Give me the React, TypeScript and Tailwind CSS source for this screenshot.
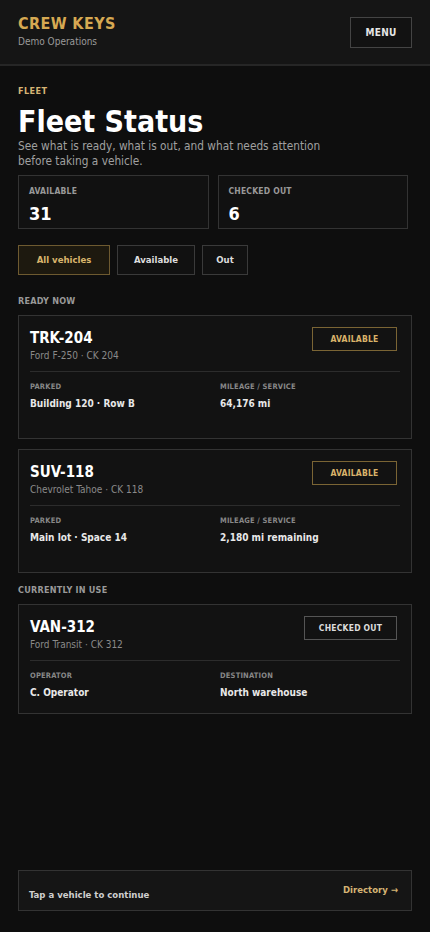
import React from "react";

const ready = [
  {
    id: "TRK-204",
    model: "Ford F-250 · CK 204",
    a: ["PARKED", "Building 120 · Row B"],
    b: ["MILEAGE / SERVICE", "64,176 mi"],
  },
  {
    id: "SUV-118",
    model: "Chevrolet Tahoe · CK 118",
    a: ["PARKED", "Main lot · Space 14"],
    b: ["MILEAGE / SERVICE", "2,180 mi remaining"],
  },
];

function VehicleCard({
  id,
  model,
  a,
  b,
  out,
}: {
  id: string;
  model: string;
  a: string[];
  b: string[];
  out?: boolean;
}) {
  return (
    <div className={`border border-[#333] bg-[#121212] pl-[11px] pr-[11px] pt-[11px] ${out ? "pb-[13px]" : "pb-[27px]"}`}>
      <div className="flex items-start justify-between">
        <div>
          <div className="text-[15px] font-bold leading-[22px] text-white">{id}</div>
          <div className="text-[10px] leading-[14px] text-[#8a8a8a]">{model}</div>
        </div>
        {out ? (
          <div className="mr-[3px] flex h-[24px] w-[93px] items-center justify-center border border-[#555] text-[8.5px] font-bold tracking-wide text-[#ddd]">
            CHECKED OUT
          </div>
        ) : (
          <div className="mr-[3px] flex h-[24px] w-[85px] items-center justify-center border border-[#7a6434] text-[8.5px] font-bold tracking-wide text-[#d9b36a]">
            AVAILABLE
          </div>
        )}
      </div>
      <div className="mt-[8px] border-t border-[#2c2c2c]" />
      <div className="mt-[10px] grid grid-cols-2 gap-[10px]">
        {[a, b].map((f) => (
          <div key={f[0]}>
            <div className="text-[7.5px] font-bold leading-[10px] tracking-wide text-[#888]">{f[0]}</div>
            <div className="mt-[5px] text-[10px] font-bold leading-[14px] text-[#e8e8e8]">{f[1]}</div>
          </div>
        ))}
      </div>
    </div>
  );
}

export default function App() {
  return (
    <div
      className="flex min-h-[932px] flex-col bg-[#0e0e0e] text-white"
      style={{ fontFamily: '"DejaVu Sans Condensed", "DejaVu Sans", Verdana, sans-serif' }}
    >
      {/* Header */}
      <header className="flex h-[66px] items-center justify-between border-b-2 border-[#262626] bg-[#151515] px-[18px]">
        <div className="mb-[2px]">
          <div className="text-[16px] font-bold leading-[20px] tracking-wide text-[#d6a952]">CREW KEYS</div>
          <div className="mt-[2px] text-[10px] leading-[12px] text-[#9a9a9a]">Demo Operations</div>
        </div>
        <button className="flex h-[31px] w-[62px] items-center justify-center border border-[#444] bg-[#121212] text-[10px] font-bold tracking-wide text-[#e5e5e5]">
          MENU
        </button>
      </header>

      <main className="flex flex-1 flex-col px-[18px] pt-[19px]">
        <div className="text-[9px] font-bold leading-[12px] tracking-wider text-[#d6b474]">FLEET</div>
        <h1 className="mt-[8px] text-[30px] font-bold leading-[34px] text-white">Fleet Status</h1>
        <p className="text-[11.75px] leading-[15px] text-[#a0a0a0]">
          See what is ready, what is out, and what needs attention
          <br />
          before taking a vehicle.
        </p>

        {/* Stats */}
        <div className="mt-[6px] grid w-[390px] grid-cols-2 gap-[9px]">
          {[
            ["AVAILABLE", "31"],
            ["CHECKED OUT", "6"],
          ].map(([label, value]) => (
            <div key={label} className="h-[54px] border border-[#333] bg-[#111] px-[10px] pt-[10px]">
              <div className="text-[8.5px] font-bold leading-[10px] tracking-wide text-[#999]">{label}</div>
              <div className="mt-[8px] text-[18px] font-bold leading-[20px] text-white">{value}</div>
            </div>
          ))}
        </div>

        {/* Filters */}
        <div className="mt-[16px] flex gap-[7px]">
          <button className="flex h-[30px] w-[92px] items-center justify-center border border-[#6e5a30] bg-[#1d190f] text-[9.5px] font-bold text-[#d9b56c]">
            All vehicles
          </button>
          <button className="flex h-[30px] w-[78px] items-center justify-center border border-[#3a3a3a] bg-[#111] text-[9.5px] font-bold text-[#ddd]">
            Available
          </button>
          <button className="flex h-[30px] w-[46px] items-center justify-center border border-[#3a3a3a] bg-[#111] text-[9.5px] font-bold text-[#ddd]">
            Out
          </button>
        </div>

        <div className="mt-[21px] text-[9px] font-bold leading-[10px] tracking-wide text-[#999]">READY NOW</div>
        <div className="mt-[9px] flex flex-col gap-[10px]">
          {ready.map((v) => (
            <VehicleCard key={v.id} {...v} />
          ))}
        </div>

        <div className="mt-[12px] text-[9px] font-bold leading-[10px] tracking-wide text-[#999]">CURRENTLY IN USE</div>
        <div className="mt-[9px]">
          <VehicleCard
            id="VAN-312"
            model="Ford Transit · CK 312"
            a={["OPERATOR", "C. Operator"]}
            b={["DESTINATION", "North warehouse"]}
            out
          />
        </div>

        {/* Footer bar */}
        <div className="mb-[21px] mt-auto flex h-[41px] items-center justify-between border border-[#333] bg-[#151515] pl-[10px] pr-[13px]">
          <div className="mt-[10px] text-[9.5px] font-bold text-[#cfcfcf]">Tap a vehicle to continue</div>
          <div className="mt-[-1px] text-[9.5px] font-bold text-[#d6b474]">Directory →</div>
        </div>
      </main>
    </div>
  );
}
